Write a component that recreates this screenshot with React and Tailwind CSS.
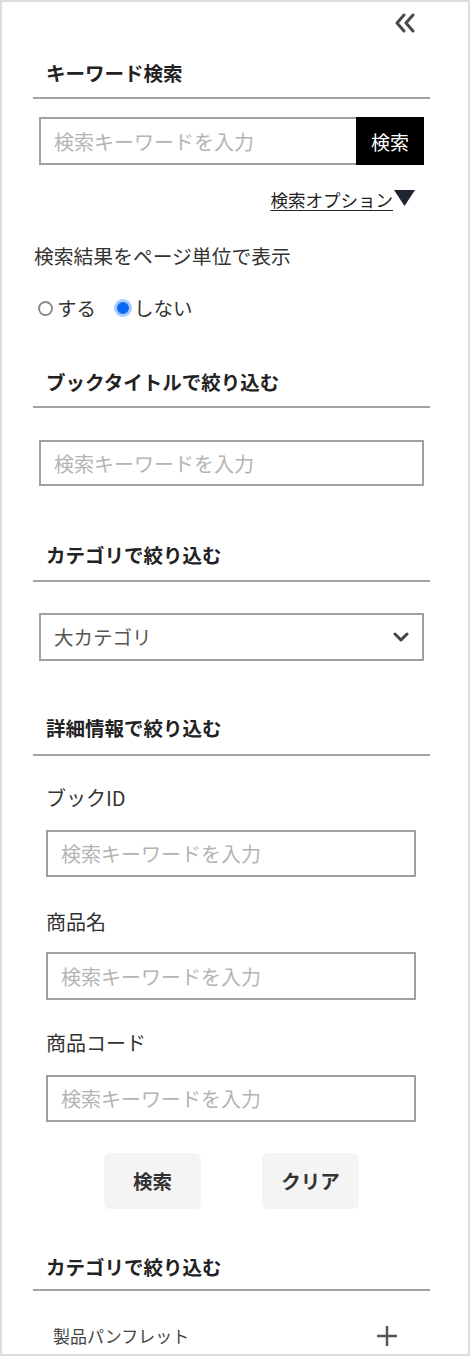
import React from "react";

const font = "font-['Noto_Sans_CJK_JP','Noto_Sans',sans-serif]";

function SectionTitle({ children, className = "", pb = "pb-[10px]" }) {
  return (
    <div className={`border-b-2 border-[#a3a3a3] ${pb} ${className}`}>
      <h2 className="pl-[13px] text-[19.5px] leading-[28px] font-bold text-[#222]">{children}</h2>
    </div>
  );
}

function TextBox({ className = "", h = "h-[48px]" }) {
  return (
    <input
      type="text"
      placeholder="検索キーワードを入力"
      className={`${h} border-2 border-[#a0a0a0] bg-white px-[13px] text-[20px] text-[#333] outline-none placeholder:text-[#b4b4b4] ${className}`}
    />
  );
}

export default function App() {
  return (
    <div className={`${font} w-[470px] h-[1356px] overflow-hidden border-2 border-[#dcdcdc] bg-white`}>
      <div className="ml-[31px] w-[397px] flex flex-col">
        {/* collapse icon */}
        <div className="mt-[11px] flex justify-end pr-[14px]">
          <svg width="22" height="20" viewBox="0 0 22 20" fill="none" stroke="#4a4a4a" strokeWidth="3" strokeLinecap="round" strokeLinejoin="round">
            <polyline points="10,2 3,10 10,18" />
            <polyline points="19,2 12,10 19,18" />
          </svg>
        </div>

        <SectionTitle className="mt-[26px]">キーワード検索</SectionTitle>

        <div className="mt-[18px] ml-[6px] flex w-[385px]">
          <TextBox className="w-[317px] border-r-0" />
          <button className="w-[68px] h-[48px] bg-black text-white text-[19px] leading-none">検索</button>
        </div>

        <div className="mt-[23px] mr-[15px] flex justify-end items-center h-[24px]">
          <span className="text-[17.5px] leading-[24px] text-[#222] underline underline-offset-[3px]">検索オプション</span>
          <svg width="21" height="16" viewBox="0 0 21 16" className="ml-[1px] -mt-[4px]">
            <polygon points="0,0 21,0 10.5,16" fill="#1f2530" />
          </svg>
        </div>

        <p className="mt-[32px] ml-[1px] text-[19.8px] leading-[24px] text-[#333]">検索結果をページ単位で表示</p>

        <div className="mt-[28px] ml-[5px] flex items-center h-[24px] text-[19.5px] text-[#333]">
          <span className="w-[15px] h-[15px] rounded-full border-2 border-[#8c8c8c] bg-white" />
          <span className="ml-[4px]">する</span>
          <span className="ml-[18px] w-[18px] h-[18px] rounded-full border-[3px] border-[#a9ccff] bg-[#0b66f2]" />
          <span className="ml-[2px]">しない</span>
        </div>

        <SectionTitle className="mt-[48px]">ブックタイトルで絞り込む</SectionTitle>

        <TextBox className="mt-[32px] ml-[6px] w-[385px]" h="h-[46px]" />

        <SectionTitle className="mt-[55px]" pb="pb-[11px]">カテゴリで絞り込む</SectionTitle>

        <div className="mt-[31px] ml-[6px] w-[385px] h-[48px] border-2 border-[#a0a0a0] flex items-center justify-between pl-[13px] pr-[13px]">
          <span className="text-[19.5px] text-[#555]">大カテゴリ</span>
          <svg width="16" height="10" viewBox="0 0 16 10" fill="none" stroke="#444" strokeWidth="3" strokeLinecap="round" strokeLinejoin="round">
            <polyline points="2,2 8,8 14,2" />
          </svg>
        </div>

        <SectionTitle className="mt-[53px]" pb="pb-[12px]">詳細情報で絞り込む</SectionTitle>

        <div className="ml-[13px] flex flex-col">
          <label className="mt-[28px] text-[20px] leading-[28px] text-[#333]">ブックID</label>
          <TextBox className="mt-[18px] w-[370px]" h="h-[47px]" />
          <label className="mt-[31px] text-[20px] leading-[28px] text-[#333]">商品名</label>
          <TextBox className="mt-[16px] w-[370px]" />
          <label className="mt-[29px] text-[20px] leading-[28px] text-[#333]">商品コード</label>
          <TextBox className="mt-[18px] w-[370px]" h="h-[47px]" />
        </div>

        <div className="mt-[31px] ml-[71px] flex gap-[61px]">
          <button className="w-[97px] h-[56px] rounded-[6px] bg-[#f4f4f4] text-[19.5px] font-bold text-[#333]">検索</button>
          <button className="w-[97px] h-[56px] rounded-[6px] bg-[#f4f4f4] text-[19.5px] font-bold text-[#333]">クリア</button>
        </div>

        <SectionTitle className="mt-[44px]" pb="pb-[8px]">カテゴリで絞り込む</SectionTitle>

        <div className="mt-[33px] ml-[20px] mr-[32px] flex items-center justify-between h-[24px]">
          <span className="text-[17px] leading-[24px] text-[#444]">製品パンフレット</span>
          <svg width="22" height="22" viewBox="0 0 22 22" fill="none" stroke="#555" strokeWidth="2.5">
            <line x1="11" y1="1" x2="11" y2="21" />
            <line x1="1" y1="11" x2="21" y2="11" />
          </svg>
        </div>
      </div>
    </div>
  );
}
